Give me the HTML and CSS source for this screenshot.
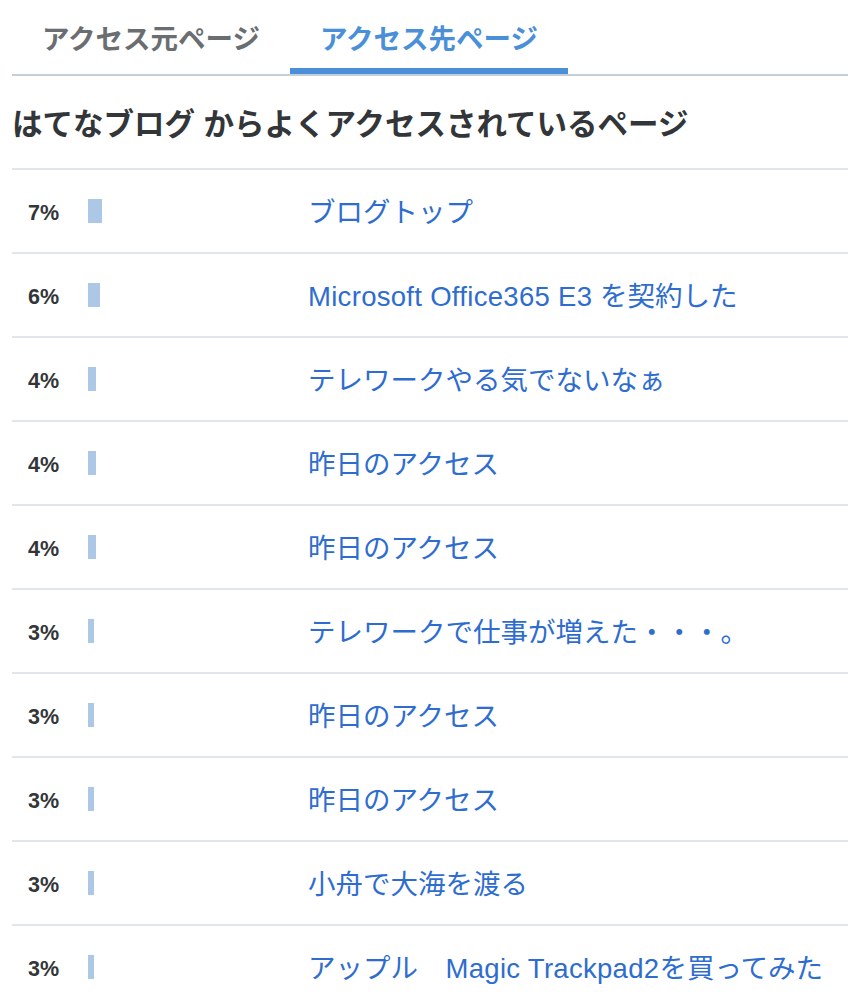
FILE: index.html
```html
<!DOCTYPE html>
<html lang="ja">
<head>
<meta charset="utf-8">
<title>アクセス先ページ</title>
<link rel="stylesheet" href="styles.css">
</head>
<body>
<div class="panel">
  <div class="tabs">
    <div class="tab">アクセス元ページ</div>
    <div class="tab tab-active">アクセス先ページ</div>
  </div>
  <h2 class="heading">はてなブログ からよくアクセスされているページ</h2>
  <ul class="rows">
    <li class="row"><span class="pct">7%</span><span class="bar-cell"><span class="bar" style="width:14px"></span></span><a class="link">ブログトップ</a></li>
    <li class="row"><span class="pct">6%</span><span class="bar-cell"><span class="bar" style="width:12px"></span></span><a class="link"><span class="latin">Microsoft Office365 E3</span> を契約した</a></li>
    <li class="row"><span class="pct">4%</span><span class="bar-cell"><span class="bar" style="width:8px"></span></span><a class="link">テレワークやる気でないなぁ</a></li>
    <li class="row"><span class="pct">4%</span><span class="bar-cell"><span class="bar" style="width:8px"></span></span><a class="link">昨日のアクセス</a></li>
    <li class="row"><span class="pct">4%</span><span class="bar-cell"><span class="bar" style="width:8px"></span></span><a class="link">昨日のアクセス</a></li>
    <li class="row"><span class="pct">3%</span><span class="bar-cell"><span class="bar" style="width:6px"></span></span><a class="link">テレワークで仕事が増えた・・・。</a></li>
    <li class="row"><span class="pct">3%</span><span class="bar-cell"><span class="bar" style="width:6px"></span></span><a class="link">昨日のアクセス</a></li>
    <li class="row"><span class="pct">3%</span><span class="bar-cell"><span class="bar" style="width:6px"></span></span><a class="link">昨日のアクセス</a></li>
    <li class="row"><span class="pct">3%</span><span class="bar-cell"><span class="bar" style="width:6px"></span></span><a class="link">小舟で大海を渡る</a></li>
    <li class="row"><span class="pct">3%</span><span class="bar-cell"><span class="bar" style="width:6px"></span></span><a class="link">アップル　<span class="latin">Magic Trackpad2</span>を買ってみた</a></li>
  </ul>
</div>
</body>
</html>
```

FILE: styles.css
```css
html, body {
  margin: 0;
  padding: 0;
  background: #ffffff;
}

body {
  font-family: "Liberation Sans", "Noto Sans CJK JP", sans-serif;
  color: #333639;
}

.panel {
  margin-left: 12px;
}

.tabs {
  display: flex;
  border-bottom: 2px solid #c4ced6;
}

.tab {
  width: 278px;
  padding-top: 20px;
  padding-bottom: 8px;
  border-bottom: 6px solid transparent;
  text-align: center;
  font-size: 27.5px;
  line-height: 40px;
  font-weight: bold;
  color: #6b6e71;
}

.tab-active {
  color: #4a90d9;
  border-bottom-color: #4a90d9;
}

.heading {
  margin: 26px 0 21px;
  font-size: 30.5px;
  line-height: 45px;
  font-weight: bold;
  color: #333639;
}

.rows {
  list-style: none;
  margin: 0;
  padding: 0;
}

.row {
  box-sizing: border-box;
  display: flex;
  align-items: center;
  height: 84px;
  border-top: 2px solid #e1e6ea;
  padding-left: 16px;
  padding-top: 3px;
}

.pct {
  width: 60px;
  font-size: 21.5px;
  font-weight: bold;
  color: #333639;
  line-height: 30px;
}

.bar-cell {
  width: 220px;
  display: flex;
  align-items: center;
  margin-top: -3px;
}

.bar {
  display: block;
  height: 24px;
  background: #adc8e7;
}

.link {
  font-size: 27.5px;
  line-height: 40px;
  color: #2e6dcf;
  text-decoration: none;
  white-space: nowrap;
}

.latin {
  letter-spacing: 0.3px;
}
```
